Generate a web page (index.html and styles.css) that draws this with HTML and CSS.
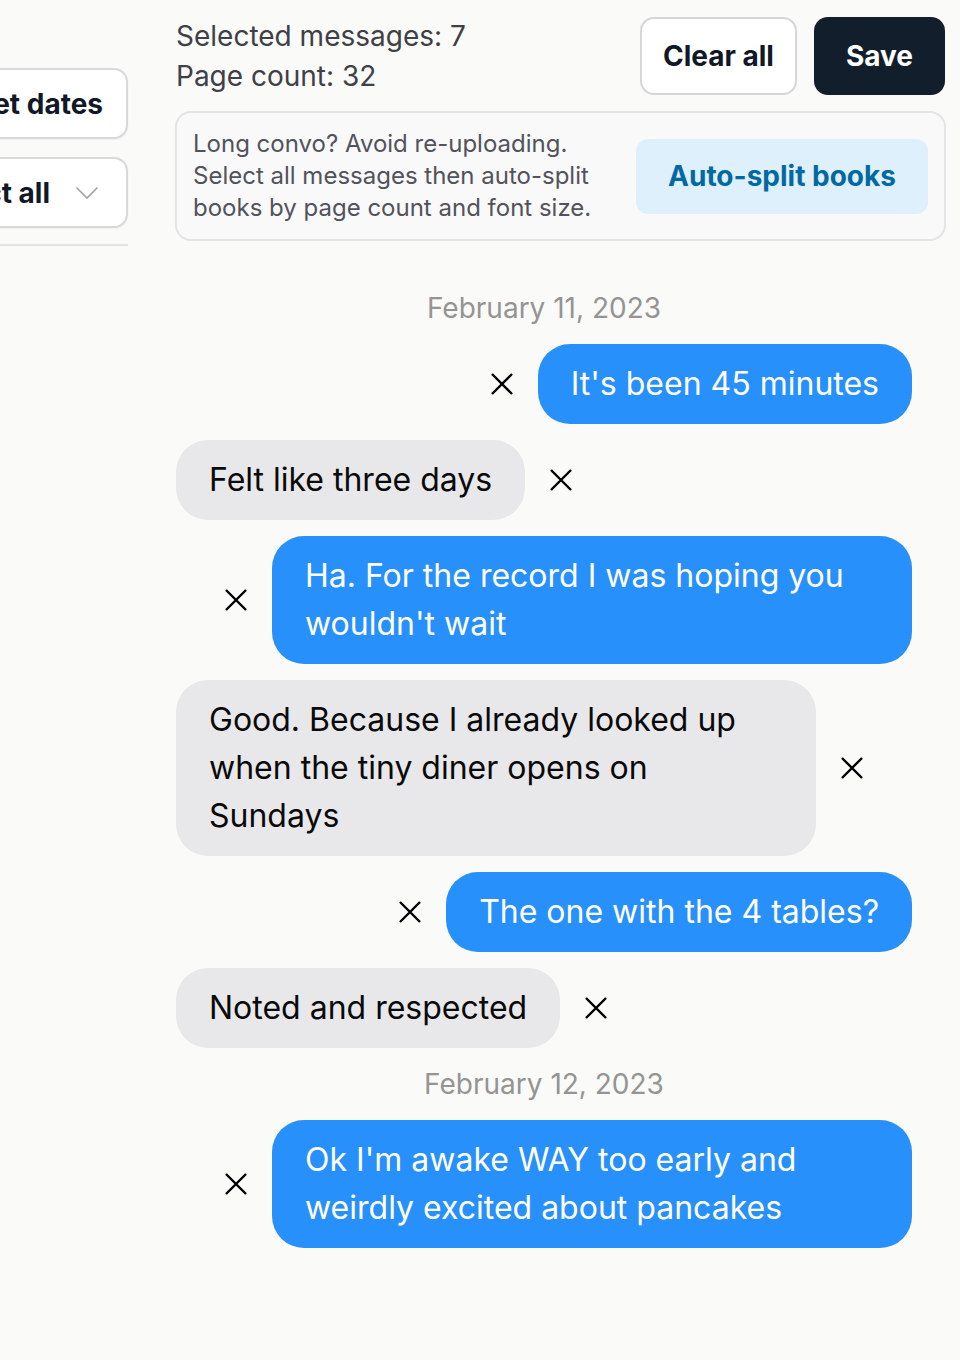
FILE: index.html
```html
<!DOCTYPE html>
<html lang="en">

<head>
    <meta charset="UTF-8">
    <meta name="viewport" content="width=device-width, initial-scale=1.0">
    <title>Message picker</title>

    <link rel="stylesheet" href="styles.css">
</head>

<body>
    <div class="layout">

        <aside class="sidebar">
            <button type="button" class="side-btn">Reset dates</button>
            <button type="button" class="side-btn side-select">
                Select all
                <svg class="chevron" width="24" height="14" viewBox="0 0 24 14" fill="none">
                    <path d="M1.5 1.5 L12 12 L22.5 1.5" stroke="#a1a1aa" stroke-width="1.6" />
                </svg>
            </button>
            <hr class="side-rule">
        </aside>

        <main class="main">

            <div class="toolbar">
                <div class="counts">
                    <div>Selected messages: 7</div>
                    <div>Page count: 32</div>
                </div>
                <div class="actions">
                    <button type="button" class="btn btn-outline">Clear all</button>
                    <button type="button" class="btn btn-dark">Save</button>
                </div>
            </div>

            <div class="tip">
                <p class="tip-text">Long convo? Avoid re-uploading.<br>Select all messages then auto-split<br>books by page count and font size.</p>
                <button type="button" class="btn btn-soft">Auto-split books</button>
            </div>

            <div class="thread">

                <div class="date">February 11, 2023</div>

                <div class="row row-sent">
                    <button type="button" class="remove"><svg viewBox="0 0 24 24"><path d="M2 2 L22 22 M22 2 L2 22" /></svg></button>
                    <div class="bubble sent">It's been 45 minutes</div>
                </div>

                <div class="row">
                    <div class="bubble received">Felt like three days</div>
                    <button type="button" class="remove"><svg viewBox="0 0 24 24"><path d="M2 2 L22 22 M22 2 L2 22" /></svg></button>
                </div>

                <div class="row row-sent">
                    <button type="button" class="remove"><svg viewBox="0 0 24 24"><path d="M2 2 L22 22 M22 2 L2 22" /></svg></button>
                    <div class="bubble sent">Ha. For the record I was hoping you wouldn't wait</div>
                </div>

                <div class="row">
                    <div class="bubble received">Good. Because I already looked up when the tiny diner opens on Sundays</div>
                    <button type="button" class="remove"><svg viewBox="0 0 24 24"><path d="M2 2 L22 22 M22 2 L2 22" /></svg></button>
                </div>

                <div class="row row-sent">
                    <button type="button" class="remove"><svg viewBox="0 0 24 24"><path d="M2 2 L22 22 M22 2 L2 22" /></svg></button>
                    <div class="bubble sent">The one with the 4 tables?</div>
                </div>

                <div class="row">
                    <div class="bubble received">Noted and respected</div>
                    <button type="button" class="remove"><svg viewBox="0 0 24 24"><path d="M2 2 L22 22 M22 2 L2 22" /></svg></button>
                </div>

                <div class="date">February 12, 2023</div>

                <div class="row row-sent">
                    <button type="button" class="remove"><svg viewBox="0 0 24 24"><path d="M2 2 L22 22 M22 2 L2 22" /></svg></button>
                    <div class="bubble sent">Ok I'm awake WAY too early and weirdly excited about pancakes</div>
                </div>

            </div>
        </main>
    </div>
</body>

</html>
```

FILE: styles.css
```css
*,
*::before,
*::after {
    margin: 0;
    padding: 0;
    box-sizing: border-box;
}

body {
    background-color: #fafaf9;
    font-family: Inter, "Noto Sans", sans-serif;
    color: #111827;
    overflow: hidden;
}

button {
    font-family: inherit;
    cursor: pointer;
}

.layout {
    display: flex;
    gap: 48px;
}

/* left column, scrolled partly out of view */
.sidebar {
    width: 280px;
    margin-left: -152px;
    padding-top: 68px;
    display: flex;
    flex-direction: column;
    gap: 18px;
}

.side-btn {
    height: 71px;
    background-color: #fff;
    border: 2px solid #d9d9db;
    border-radius: 14px;
    font-size: 28px;
    font-weight: 700;
    color: #111827;
    text-align: right;
    padding: 0 23px;
    display: flex;
    align-items: center;
    justify-content: flex-end;
    gap: 25px;
    box-shadow: 0 1px 2px rgba(0, 0, 0, .05);
}

.side-select {
    padding-right: 27px;
}

.chevron {
    flex-shrink: 0;
}

.side-rule {
    border: none;
    border-top: 2px solid #e4e4e7;
    margin-top: -2px;
}

.main {
    width: 770px;
    padding-top: 16px;
}

.toolbar {
    display: flex;
    justify-content: space-between;
    align-items: center;
}

.counts {
    font-size: 28px;
    line-height: 40px;
    color: #3f3f46;
}

.actions {
    display: flex;
    gap: 17px;
    padding-right: 1px;
}

.btn {
    height: 78px;
    border-radius: 14px;
    font-size: 28px;
    font-weight: 700;
    padding: 0 24px;
}

.btn-outline {
    background-color: #fff;
    border: 2px solid #d6d6d8;
    color: #111827;
    padding: 0 21px;
}

.btn-dark {
    background-color: #121e2b;
    border: none;
    color: #fff;
    padding: 0 32px;
}

.tip {
    margin: 15px 0 0 -1px;
    border: 2px solid #e4e4e7;
    border-radius: 16px;
    background-color: #f9f9f9;
    padding: 15px 16px;
    display: flex;
    align-items: center;
    justify-content: space-between;
}

.tip-text {
    font-size: 24px;
    line-height: 32px;
    color: #52525b;
}

.btn-soft {
    height: 75px;
    width: 292px;
    background-color: #dff0fd;
    border: none;
    color: #0369a1;
    border-radius: 12px;
}

.thread {
    width: 736px;
    margin-top: 47px;
    display: flex;
    flex-direction: column;
    gap: 16px;
}

.date {
    text-align: center;
    font-size: 28px;
    line-height: 40px;
    color: #949494;
}

.row {
    display: flex;
    align-items: center;
    gap: 24px;
}

.row-sent {
    justify-content: flex-end;
}

.bubble {
    max-width: 640px;
    padding: 16px 33px;
    border-radius: 32px;
    font-size: 32px;
    line-height: 48px;
}

.sent {
    background-color: #2890fa;
    color: #fff;
}

.received {
    background-color: #e8e8ea;
    color: #0a0a0a;
}

.remove {
    width: 24px;
    height: 24px;
    border: none;
    background: none;
    flex-shrink: 0;
}

.remove svg {
    width: 24px;
    height: 24px;
    display: block;
}

.remove path {
    stroke: #000;
    stroke-width: 2.4;
    fill: none;
}
```
